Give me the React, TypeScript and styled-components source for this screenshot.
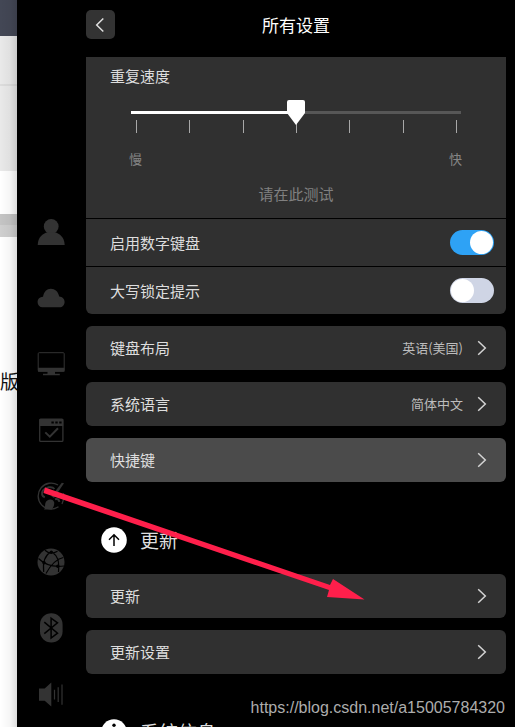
import React, { useState } from 'react';
import styled, { createGlobalStyle, css } from 'styled-components';

const GlobalStyle = createGlobalStyle`
  *, *::before, *::after { box-sizing: border-box; }
  body {
    margin: 0;
    background: #000;
    font-family: "Noto Sans CJK SC", "Noto Sans", sans-serif;
    color: #dedede;
  }
  button, input { font: inherit; color: inherit; }
`;

const Page = styled.div`
  position: relative;
  display: grid;
  grid-template-columns: 17px 69px minmax(0, 1fr);
  height: 100vh;
  overflow: hidden;
  background: #000;
`;

const Desktop = styled.div`
  position: relative;
  display: flex;
  flex-direction: column;
  overflow: hidden;
  background: #fff;

  &::after {
    content: '';
    position: absolute;
    inset: 0;
    background: linear-gradient(to right, rgba(0, 0, 0, 0), rgba(0, 0, 0, 0.04) 60%, rgba(0, 0, 0, 0.13));
  }
`;

const Band = styled.div<{ $height: number; $color: string }>`
  flex: none;
  height: ${(p) => p.$height}px;
  background: ${(p) => p.$color};
`;

const DesktopText = styled.p`
  margin: 130px 0 0;
  width: 20px;
  font-size: 19px;
  line-height: 28px;
  font-weight: 400;
  color: #111;
`;

const Rail = styled.nav`
  display: flex;
  flex-direction: column;
  padding: 199px 1px 0 0;
`;

const RailButton = styled.button`
  display: flex;
  flex: none;
  align-items: center;
  justify-content: center;
  height: 66px;
  padding: 0;
  border: 0;
  background: none;
  color: #333;
`;

const Content = styled.main`
  min-width: 0;
  padding-right: 9px;
`;

const Header = styled.header`
  display: grid;
  grid-template-columns: 29px 1fr 29px;
  align-items: start;
  height: 57px;
  padding-top: 10px;
`;

const BackButton = styled.button`
  display: grid;
  place-items: center;
  height: 29px;
  padding: 0 2px 0 0;
  border: 0;
  border-radius: 5px;
  background: #333;
`;

const Title = styled.h1`
  margin: 0;
  text-align: center;
  font-size: 17px;
  line-height: 30px;
  font-weight: 400;
  color: #fff;
`;

const Group = styled.div`
  display: flex;
  flex-direction: column;
  gap: 1px;
  margin-bottom: 12px;
  border-radius: 0 0 6px 6px;
  overflow: hidden;
`;

const SpeedPanel = styled.section`
  display: flex;
  flex-direction: column;
  height: 161px;
  padding: 7px 0 0 24px;
  background: #303030;
`;

const SpeedLabel = styled.label`
  font-size: 15px;
  line-height: 24px;
`;

const SliderBox = styled.div`
  display: flex;
  flex-direction: column;
  margin: 12px 45px 0 21px;
`;

const Slider = styled.input`
  position: relative;
  z-index: 1;
  display: block;
  width: 100%;
  height: 25px;
  margin: 0;
  appearance: none;
  background: linear-gradient(to right, #fff 50%, #575757 50%) 0 11px / 100% 3px no-repeat;

  &::-webkit-slider-thumb {
    appearance: none;
    width: 18px;
    height: 25px;
    border-radius: 2px;
    background: #fff;
    clip-path: polygon(0 0, 100% 0, 100% 52%, 50% 100%, 0 52%);
  }
`;

const Ticks = styled.div`
  display: flex;
  justify-content: space-between;
  margin: -5px 4px 0 5px;

  span {
    width: 1px;
    height: 13px;
    background: #a8a8a8;
  }
`;

const SliderEnds = styled.div`
  display: flex;
  justify-content: space-between;
  margin: 16px -1px 0 -2px;
  font-size: 13px;
  line-height: 20px;
  color: #858585;
`;

const TestInput = styled.input`
  width: 160px;
  height: 24px;
  margin: 12px auto 0;
  padding: 0;
  border: 0;
  outline: 0;
  background: none;
  text-align: center;
  font-size: 15px;

  &::placeholder { color: #808080; opacity: 1; }
`;

const rowBase = css`
  display: flex;
  align-items: center;
  width: 100%;
  background: #303030;
  font-size: 15px;
  line-height: 24px;
  text-align: left;
`;

const SwitchRow = styled.label`
  ${rowBase}
  justify-content: space-between;
  height: 47px;
  padding: 0 12px 0 24px;
`;

const Switch = styled.input`
  appearance: none;
  display: flex;
  width: 44px;
  height: 25px;
  margin: 0;
  padding: 1px;
  border-radius: 13px;
  background: #cfd5e5;

  &::before {
    content: '';
    width: 23px;
    height: 23px;
    border-radius: 50%;
    background: #fff;
  }
  &:checked { justify-content: flex-end; background: #2ea2f5; }
`;

const Rows = styled.div`
  display: flex;
  flex-direction: column;
  gap: 12px;
`;

const LinkRow = styled.button<{ $active?: boolean }>`
  ${rowBase}
  height: 44px;
  padding: 0 19px 0 24px;
  border: 0;
  border-radius: 6px;
  background: ${(p) => (p.$active ? '#4b4b4b' : '#303030')};
`;

const RowValue = styled.span`
  margin-left: auto;
  margin-right: 14px;
  font-size: 13px;
  color: #bdbdbd;
`;

const RowName = styled.span`
  margin-right: auto;
`;

const SectionTitle = styled.h2`
  display: flex;
  align-items: center;
  gap: 13px;
  height: 92px;
  margin: 0;
  padding: 24px 0 0 15px;
  font-size: 19px;
  line-height: 28px;
  font-weight: 400;
`;

const Arrow = styled.svg`
  position: absolute;
  left: 43px;
  top: 486px;
  pointer-events: none;
`;

const Watermark = styled.a`
  position: absolute;
  right: 10px;
  bottom: 9px;
  font-family: "Liberation Sans", Arial, sans-serif;
  font-size: 16px;
  line-height: 20px;
  color: #adadad;
  text-decoration: none;
`;

const Chevron = () => (
  <svg width="10" height="16" viewBox="0 0 10 16" fill="none" stroke="#d4d4d4" strokeWidth="1.5" aria-hidden="true">
    <path d="M1.2 1.2 8.3 8 1.2 14.8" />
  </svg>
);

const RailIcon = ({ children }: { children: React.ReactNode }) => (
  <svg width="30" height="30" viewBox="0 0 30 30" fill="none" aria-hidden="true">{children}</svg>
);

const railItems = [
  {
    name: '帐户',
    icon: <><circle cx="15.2" cy="9.4" r="7.4" fill="currentColor" /><path d="M1.7 28C2 20 6.6 16.7 11.7 15.3h7C23.8 16.7 28.3 20 28.7 28Z" fill="currentColor" /></>,
  },
  {
    name: '云同步',
    icon: <path d="M6.5 24.2A5 5 0 0 1 1.6 19c0-3.2 2.2-5.1 5.4-5.3C8 8.7 10.8 5.8 14.8 5.8c4.2 0 7.4 2.8 8.4 7.6 3.2.2 5.4 2.4 5.4 5.5 0 3-2.2 5.3-5 5.3Z" fill="currentColor" />,
  },
  {
    name: '显示',
    icon: <><rect x="2.2" y="3.7" width="26" height="18.5" rx="1" stroke="currentColor" /><path d="M2 18.8h26.5v4H19v2h4.8v1.5H7V24.8h4.5v-2H2Z" fill="currentColor" /></>,
  },
  {
    name: '默认程序',
    icon: <><rect x="3.7" y="4.2" width="23.2" height="22.2" rx="1" stroke="currentColor" strokeWidth="1.3" /><path d="M3.5 4h23.7v7H3.5Z" fill="currentColor" /><path d="M15.4 7.5h2.4M19.3 7.5h2.4M23.2 7.5h2.4" stroke="#000" strokeWidth="2" /><path d="m9.3 17.4 4.5 4.3 8.2-8.4" stroke="currentColor" strokeWidth="2" /></>,
  },
  {
    name: '个性化',
    icon: <><path d="M22 4A13 13 0 1 0 22.500 25.800M27.400 12.200c.8 4 .2 7.500-1.400 10.800" stroke="currentColor" strokeWidth="1.3" /><path d="M28 2.300 18 17l-2.600-1.800L25.800 1.800Z" fill="currentColor" /><path d="M18.300 21.800c0 3-1.500 6-3 6.800H8c1.600-1.400.7-4 1.400-6.500 1.400-4.800 8.300-4.800 8.900-.3Z" fill="currentColor" /><path d="M18.400 8c-2.200-3-8.900-1.900-11.300 1.400-2.200 3-1 5.900 1.700 6.900M19 18.200c2.500-1 4 .6 4.400 2.700" stroke="currentColor" strokeWidth="2" /></>,
  },
  {
    name: '网络',
    icon: <><circle cx="15" cy="15" r="13.5" fill="currentColor" /><g stroke="#000" strokeWidth="1.2"><path d="M9 3.200c3.600 3.500 8 3.500 12.500 1M15 4.800C9.500 8 6.500 14.500 7.700 25M16 5c5.600 4 7.400 8 6.500 20M2.500 11.500c6.500 6.500 15 8.800 25.500 7.500M27.300 10.500c-5.600 1.200-11 4.500-17.300 16" /></g><g fill="#000"><circle cx="15.3" cy="5.300" r="1.700" /><circle cx="8" cy="15.800" r="1.700" /><circle cx="21.800" cy="19.200" r="1.700" /></g></>,
  },
  {
    name: '蓝牙',
    icon: <><rect x="4" y="0.2" width="22.6" height="29.4" rx="11.3" fill="currentColor" /><path d="m8.3 9.200 13.200 11-6.400 4.800V5.200l6.400 4.600L8.300 20.700" stroke="#000" strokeWidth="1.5" /></>,
  },
  {
    name: '声音',
    icon: <><path d="M3 9.6h5.7l6.600-6.2v24l-6.600-5.700H3Z" fill="currentColor" /><path d="M18.5 10.700v9.800M22.200 8.200V23M26 5.500v20.200" stroke="currentColor" strokeWidth="1.2" /></>,
  },
];

const SectionIcon = ({ kind }: { kind: 'update' | 'info' }) => (
  <svg width="26" height="26" viewBox="0 0 26 26" fill="none" aria-hidden="true">
    <circle cx="13" cy="13" r="12.8" fill="#fff" />
    {kind === 'update' ? (
      <path d="M13 19V7.700M8 12.700l5-5 5 5" stroke="#000" strokeWidth="1.5" />
    ) : (
      <><circle cx="13" cy="6.200" r="1.700" fill="#000" /><path d="M13 10v10" stroke="#000" strokeWidth="2.2" /></>
    )}
  </svg>
);

const keyboardRows = [
  { name: '键盘布局', value: '英语(美国)' },
  { name: '系统语言', value: '简体中文' },
  { name: '快捷键', active: true },
];

const updateRows = [{ name: '更新' }, { name: '更新设置' }];

type Row = { name: string; value?: string; active?: boolean };

const RowList = ({ rows }: { rows: Row[] }) => (
  <Rows>
    {rows.map((row) => (
      <LinkRow key={row.name} type="button" $active={row.active}>
        <RowName>{row.name}</RowName>
        {row.value && <RowValue>{row.value}</RowValue>}
        <Chevron />
      </LinkRow>
    ))}
  </Rows>
);

export default function App() {
  const [numLock, setNumLock] = useState(true);
  const [capsHint, setCapsHint] = useState(false);

  return (
    <>
      <GlobalStyle />
      <Page>
        <Desktop>
          <Band $height={36} $color="#434755" />
          <Band $height={48} $color="#e9e9e9" />
          <Band $height={2} $color="#dcdcdc" />
          <Band $height={85} $color="#e9e9e9" />
          <Band $height={43} $color="#fff" />
          <Band $height={11} $color="#c4c4c4" />
          <Band $height={12} $color="#cfcfcf" />
          <DesktopText>版</DesktopText>
        </Desktop>

        <Rail aria-label="设置分类">
          {railItems.map((item) => (
            <RailButton key={item.name} type="button" aria-label={item.name}>
              <RailIcon>{item.icon}</RailIcon>
            </RailButton>
          ))}
        </Rail>

        <Content>
          <Header>
            <BackButton type="button" aria-label="返回">
              <svg width="10" height="16" viewBox="0 0 10 16" fill="none" stroke="#e0e0e0" strokeWidth="1.5" aria-hidden="true">
                <path d="M8.300 1.500 1.700 8l6.600 6.500" />
              </svg>
            </BackButton>
            <Title>所有设置</Title>
          </Header>

          <Group>
            <SpeedPanel>
              <SpeedLabel htmlFor="repeat-speed">重复速度</SpeedLabel>
              <SliderBox>
                <Slider id="repeat-speed" type="range" min={0} max={6} defaultValue={3} />
                <Ticks>
                  {[0, 1, 2, 3, 4, 5, 6].map((n) => <span key={n} />)}
                </Ticks>
                <SliderEnds>
                  <span>慢</span>
                  <span>快</span>
                </SliderEnds>
                <TestInput type="text" placeholder="请在此测试" aria-label="请在此测试" />
              </SliderBox>
            </SpeedPanel>
            <SwitchRow>
              启用数字键盘
              <Switch type="checkbox" checked={numLock} onChange={(e) => setNumLock(e.target.checked)} />
            </SwitchRow>
            <SwitchRow>
              大写锁定提示
              <Switch type="checkbox" checked={capsHint} onChange={(e) => setCapsHint(e.target.checked)} />
            </SwitchRow>
          </Group>

          <RowList rows={keyboardRows} />

          <SectionTitle><SectionIcon kind="update" />更新</SectionTitle>
          <RowList rows={updateRows} />

          <SectionTitle><SectionIcon kind="info" />系统信息</SectionTitle>
        </Content>

        <Arrow width="322" height="116" viewBox="0 0 322 116" aria-hidden="true">
          <path d="M2 1.500 287 99 290 93 321.500 113.500 284 111 286 104 .5 7Z" fill="#ff1f4b" />
        </Arrow>
        <Watermark href="https://blog.csdn.net/a15005784320">https://blog.csdn.net/a15005784320</Watermark>
      </Page>
    </>
  );
}
